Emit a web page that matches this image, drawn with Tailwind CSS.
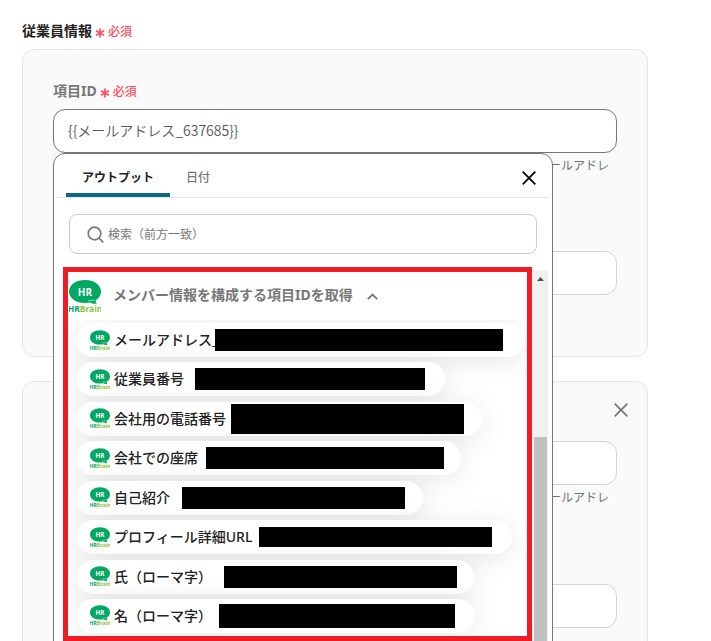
<!DOCTYPE html>
<html lang="ja">
<head>
    <meta charset="UTF-8">
    <meta name="viewport" content="width=device-width, initial-scale=1.0">
    <title>従業員情報</title>
    <script src="https://cdn.jsdelivr.net/npm/@tailwindcss/browser@4"></script>
</head>
<body class="h-screen overflow-hidden bg-white font-['Noto_Sans','Noto_Sans_CJK_JP',sans-serif] text-sm text-[#222]">

    <!-- Shared icons -->
    <svg class="hidden">
        <symbol id="hrbrain" viewBox="0 0 32 33">
            <path d="M16 0C7 0 0 4.800 0 11.500S7 23 16 23c1.800 0 3.500-.2 5-.5 1.800 1.300 4.500 1.700 7 1-1.200-.9-1.600-2-1.300-3.300C30 18.200 32 15 32 11.500 32 4.800 25 0 16 0z" fill="#00a862"/>
            <path d="M19.500 20.500c2 .4 4.200.2 6-.7" fill="none" stroke="#fff" stroke-width=".6"/>
            <text x="16" y="15.500" text-anchor="middle" font-family="Open Sans" font-size="10" font-weight="700" fill="#fff">HR</text>
            <text x="16" y="32" text-anchor="middle" font-family="Noto Sans" font-size="8.500" font-weight="700" fill="#00a862">HR<tspan fill="#8cc63f">Brain</tspan></text>
        </symbol>
        <symbol id="asterisk" viewBox="0 0 10 10">
            <path d="M5 .5v9M1 2.700l8 4.600M9 2.700L1 7.300" stroke="#ff4d5e" stroke-width="1.700" fill="none"/>
        </symbol>
        <symbol id="close" viewBox="0 0 14 14">
            <path d="M.7.700l12.600 12.600M13.300.700L.7 13.300" stroke="currentColor" stroke-width="1.800" fill="none"/>
        </symbol>
    </svg>

    <main class="pl-[22px] pr-[63px] pt-[21px]">
        <h2 class="flex h-5 items-center gap-[3px] font-bold">
            従業員情報
            <svg class="mt-1 size-[10px]"><use href="#asterisk"/></svg>
            <span class="pt-px text-xs font-medium text-[#ff4d5e]">必須</span>
        </h2>

        <!-- First item -->
        <section class="mt-2 rounded-xl border border-[#e5e5e5] bg-[#fafafa] px-[30px] pt-[31px] pb-[61px]">
            <label for="item-id" class="flex h-5 items-center gap-[3px] font-bold text-[#777]">
                項目ID
                <svg class="mt-1 size-[10px]"><use href="#asterisk"/></svg>
                <span class="pt-px text-xs font-medium text-[#ff4d5e]">必須</span>
            </label>
            <div class="relative mt-2">
                <input id="item-id" type="text" value="{{メールアドレス_637685}}" class="block h-11 w-full rounded-xl border border-[#777] bg-white px-[14px] pb-[3px] font-['Noto_Sans_CJK_JP',sans-serif] font-[350] text-[#555]">

                <!-- Output picker -->
                <div class="absolute top-11 left-0 z-10 w-[500px] rounded-t-xl border border-[#777] bg-white px-[3px] pb-10">
                    <div class="flex h-11 items-stretch border-b border-[#e5e5e5] pl-[9px] text-xs">
                        <button type="button" class="w-[104px] border-b-4 border-[#0b6a7e] pt-2 font-bold">アウトプット</button>
                        <button type="button" class="px-4 pt-1 font-medium text-[#777]">日付</button>
                        <button type="button" aria-label="閉じる" class="mt-1 mr-[13px] ml-auto text-black"><svg class="size-[14px]"><use href="#close"/></svg></button>
                    </div>

                    <div class="mt-4 mr-3 ml-3 flex h-10 items-center gap-1 rounded-lg border border-[#ccc] pl-[17px]">
                        <svg class="size-[17px]" viewBox="0 0 17 17" fill="none" stroke="#777" stroke-width="1.700"><circle cx="7.500" cy="7.500" r="6.300"/><path d="M12 12l4.300 4.300"/></svg>
                        <input type="search" aria-label="検索" placeholder="検索（前方一致）" class="min-w-0 grow pt-px text-xs placeholder:text-[#777]">
                    </div>

                    <div class="mt-[13px] mr-px ml-[6px] flex">
                        <div class="min-w-0 grow overflow-hidden border-5 border-[#ee1c25] pb-px">
                            <button type="button" class="flex h-[48px] items-center pl-px font-bold text-[#777]">
                                <svg class="h-[33px] w-8"><use href="#hrbrain"/></svg>
                                <span class="ml-3 pb-[2px]">メンバー情報を構成する項目IDを取得</span>
                                <svg class="mt-px ml-[14px] h-[7px] w-[11px]" viewBox="0 0 11 7" fill="none" stroke="#777" stroke-width="1.900"><path d="M.8 6.200l4.700-4.700 4.700 4.700"/></svg>
                            </button>
                            <ul class="flex h-[315px] flex-col items-start justify-between overflow-hidden pt-[3px] pb-[2px] pl-2 font-medium whitespace-nowrap">
                                <li class="flex h-[34px] w-[449px] items-center rounded-full bg-white pl-[14px] shadow-[0_4px_28px_rgba(0,0,0,0.1)]">
                                    <svg class="mr-1 h-[21px] w-5 shrink-0"><use href="#hrbrain"/></svg><span class="w-[101px]">メールアドレス_</span><span class="h-[22px] w-[288px] bg-black"></span>
                                </li>
                                <li class="flex h-[34px] w-[369px] items-center rounded-full bg-white pl-[14px] shadow-[0_4px_28px_rgba(0,0,0,0.1)]">
                                    <svg class="mr-1 h-[21px] w-5 shrink-0"><use href="#hrbrain"/></svg><span class="w-[81px]">従業員番号</span><span class="h-[22px] w-[230px] bg-black"></span>
                                </li>
                                <li class="flex h-[34px] w-[406px] items-center rounded-full bg-white pl-[14px] shadow-[0_4px_28px_rgba(0,0,0,0.1)]">
                                    <svg class="mr-1 h-[21px] w-5 shrink-0"><use href="#hrbrain"/></svg><span class="w-[117px]">会社用の電話番号</span><span class="h-[30px] w-[233px] bg-black"></span>
                                </li>
                                <li class="flex h-[34px] w-[385px] items-center rounded-full bg-white pl-[14px] shadow-[0_4px_28px_rgba(0,0,0,0.1)]">
                                    <svg class="mr-1 h-[21px] w-5 shrink-0"><use href="#hrbrain"/></svg><span class="w-[92px]">会社での座席</span><span class="h-[22px] w-[238px] bg-black"></span>
                                </li>
                                <li class="flex h-[34px] w-[347px] items-center rounded-full bg-white pl-[14px] shadow-[0_4px_28px_rgba(0,0,0,0.1)]">
                                    <svg class="mr-1 h-[21px] w-5 shrink-0"><use href="#hrbrain"/></svg><span class="w-[68px]">自己紹介</span><span class="h-[22px] w-[223px] bg-black"></span>
                                </li>
                                <li class="flex h-[34px] w-[436px] items-center rounded-full bg-white pl-[14px] shadow-[0_4px_28px_rgba(0,0,0,0.1)]">
                                    <svg class="mr-1 h-[21px] w-5 shrink-0"><use href="#hrbrain"/></svg><span class="w-[145px]">プロフィール詳細URL</span><span class="h-5 w-[233px] bg-black"></span>
                                </li>
                                <li class="flex h-[34px] w-[398px] items-center rounded-full bg-white pl-[14px] shadow-[0_4px_28px_rgba(0,0,0,0.1)]">
                                    <svg class="mr-1 h-[21px] w-5 shrink-0"><use href="#hrbrain"/></svg><span class="w-[110px]">氏（ローマ字）</span><span class="h-[22px] w-[233px] bg-black"></span>
                                </li>
                                <li class="flex h-[34px] w-[399px] items-center rounded-full bg-white pl-[14px] shadow-[0_4px_28px_rgba(0,0,0,0.1)]">
                                    <svg class="mr-1 h-[21px] w-5 shrink-0"><use href="#hrbrain"/></svg><span class="w-[105px]">名（ローマ字）</span><span class="h-6 w-[236px] bg-black"></span>
                                </li>
                            </ul>
                        </div>
                        <!-- Scroll track -->
                        <div class="mt-[3px] -mb-10 flex w-4 flex-col items-center bg-[#f1f1f1] pt-[7px]">
                            <svg class="h-1 w-[7px]" viewBox="0 0 7 4"><path d="M3.500 0L7 4H0z" fill="#505050"/></svg>
                            <div class="mt-[156px] w-[13px] grow bg-[#c1c1c1]"></div>
                        </div>
                    </div>
                </div>
            </div>
            <p class="mt-1 min-h-9 pr-2 text-right text-xs leading-[18px] text-[#6b7280]">ールアドレ</p>
            <label for="item-value" class="mt-[30px] block h-5 font-bold text-[#777]">値</label>
            <input id="item-value" type="text" class="mt-2 block h-11 w-full rounded-xl border border-[#d1d5db] bg-white px-[14px]">
        </section>

        <!-- Second item -->
        <section class="relative mt-6 rounded-xl border border-[#e5e5e5] bg-[#fafafa] px-[30px] pt-[31px] pb-[61px]">
            <button type="button" aria-label="削除" class="absolute top-[21px] right-[19px] flex text-[#777]"><svg class="size-[14px]"><use href="#close"/></svg></button>
            <label for="item-id-2" class="block h-5 font-bold text-[#777]">項目ID</label>
            <input id="item-id-2" type="text" class="mt-2 block h-11 w-full rounded-xl border border-[#d1d5db] bg-white px-[14px]">
            <p class="mt-1 min-h-9 pr-2 text-right text-xs leading-[18px] text-[#6b7280]">ールアドレ</p>
            <label for="item-value-2" class="mt-[31px] block h-5 font-bold text-[#777]">値</label>
            <input id="item-value-2" type="text" class="mt-2 block h-11 w-full rounded-xl border border-[#d1d5db] bg-white px-[14px]">
        </section>
    </main>
</body>
</html>
